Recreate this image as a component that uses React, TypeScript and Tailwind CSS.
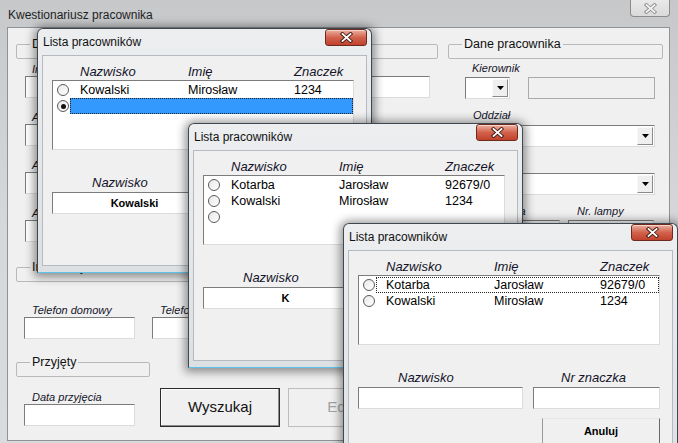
import React from 'react';

type Row = {
    nazwisko: string;
    imie: string;
    znaczek: string;
    checked?: boolean;
    selected?: boolean;
    focus?: boolean;
};

const sunken = 'border border-t-[#7c7c7c] border-l-[#7c7c7c] border-b-[#dcdcdc] border-r-[#dcdcdc]';

const CloseX = ({ inactive }: { inactive?: boolean }) => (
    <svg width="13" height="11" viewBox="0 0 13 11">
        <path d="M2.5 2 L10.5 9 M10.5 2 L2.5 9" stroke={inactive ? '#8d8d8d' : '#3e1710'} strokeWidth="3.6" strokeLinecap="square" fill="none" />
        <path d="M2.5 2 L10.5 9 M10.5 2 L2.5 9" stroke={inactive ? '#f3f3f3' : '#ffffff'} strokeWidth="1.8" strokeLinecap="square" fill="none" />
    </svg>
);

const RedClose = () => (
    <div className="mt-[0px] flex h-[17px] w-[42px] items-center justify-center rounded-[3px] border border-[#6f2a1f] bg-gradient-to-b from-[#eab0a2] via-[#d2624c] to-[#c0412c] shadow-[inset_0_1px_0_rgba(255,255,255,0.5)]">
        <CloseX />
    </div>
);

const Radio = ({ checked }: { checked?: boolean }) => (
    <span className="flex h-[12px] w-[12px] items-center justify-center rounded-full border-[1.5px] border-[#5a5a5a] bg-gradient-to-br from-[#e9e9e9] to-white">
        {checked && <span className="h-[5px] w-[5px] rounded-full bg-[#111]" />}
    </span>
);

const TextBox = ({ className, value, disabled }: { className: string; value?: string; disabled?: boolean }) => (
    <div
        className={`flex h-[22px] items-center justify-center text-[11px] font-bold text-black ${
            disabled ? 'border border-[#ababab] bg-[#f0f0f0]' : `${sunken} bg-white`
        } ${className}`}
    >
        {value}
    </div>
);

const Combo = ({ className }: { className: string }) => (
    <div className={`flex h-[22px] bg-white ${sunken} ${className}`}>
        <div className="flex-1" />
        <div className="my-[1px] mr-[1px] flex w-[16px] items-center justify-center border border-t-[#fafafa] border-l-[#fafafa] border-b-[#8a8a8a] border-r-[#8a8a8a] bg-[#efefef]">
            <svg width="7" height="4" viewBox="0 0 7 4">
                <path d="M0 0 H7 L3.5 4 Z" fill="#000" />
            </svg>
        </div>
    </div>
);

const GroupBox = ({ caption, className }: { caption: string; className: string }) => (
    <div className={`relative h-[15px] rounded-[2px] border border-[#b9b9b9] ${className}`}>
        <span className="absolute -top-[8px] left-[13px] bg-[#f0f0f0] px-[2px] text-[12.5px] leading-[15px] text-[#111]">
            {caption}
        </span>
    </div>
);

const Label = ({ text, className }: { text: string; className: string }) => (
    <div className={`h-[14px] whitespace-nowrap text-[11px] italic leading-[14px] text-[#14142a] ${className}`}>{text}</div>
);

const ListWindow = ({
    pos,
    rows,
    nameValue
}: {
    pos: string;
    rows: Row[];
    nameValue?: string;
}) => (
    <div
        className={`absolute ${pos} flex w-[335px] flex-col rounded-t-[6px] border border-[#3f474f] border-b-[#5ec3ea] bg-gradient-to-b from-[#eceef0] to-[#dde0e3] px-[4px] pb-[6px] shadow-[0_1px_10px_3px_rgba(0,0,0,0.42)]`}
    >
        <div className="flex h-[26px] items-start justify-between">
            <span className="pl-[1px] pt-[6px] text-[12px] leading-[14px] text-[#111]">Lista pracowników</span>
            <RedClose />
        </div>
        <div className="flex-1 border border-[#b4bac0] bg-[#f0f0f0] pl-[9px] pt-[9px]">
            <div className="flex h-[14px] text-[13px] italic leading-[14px] text-[#14142a]">
                <span className="w-[136px] pl-[28px]">Nazwisko</span>
                <span className="w-[106px]">Imię</span>
                <span>Znaczek</span>
            </div>
            <div className={`mt-[1px] h-[70px] w-[302px] bg-white pt-[1px] ${sunken}`}>
                {rows.map((r, i) => (
                    <div key={i} className="flex h-[16px] items-center text-[12.5px] leading-[16px] text-black">
                        <div className="w-[17px] pl-[4px]">
                            <Radio checked={r.checked} />
                        </div>
                        <div
                            className={`flex h-full flex-1 items-center pl-[10px] ${r.selected ? 'bg-[#3399ff]' : ''} ${
                                r.selected || r.focus ? 'outline-1 -outline-offset-1 outline-dotted outline-[#222]' : ''
                            }`}
                        >
                            <span className="w-[108px]">{r.nazwisko}</span>
                            <span className="w-[106px]">{r.imie}</span>
                            <span>{r.znaczek}</span>
                        </div>
                    </div>
                ))}
            </div>
            <div className="mt-[26px] flex gap-[10px]">
                <div className="w-[165px]">
                    <div className="h-[14px] pl-[40px] text-[13px] italic leading-[14px] text-[#14142a]">Nazwisko</div>
                    <TextBox className="mt-[2px] w-[165px]" value={nameValue} />
                </div>
                <div className="w-[127px]">
                    <div className="h-[14px] pl-[28px] text-[13px] italic leading-[14px] text-[#14142a]">Nr znaczka</div>
                    <TextBox className="mt-[2px] w-[127px]" />
                </div>
            </div>
            <button
                type="button"
                className="ml-[184px] mt-[9px] flex h-[26px] w-[118px] items-center justify-center border border-t-[#e6e6e6] border-l-[#9a9a9a] border-b-[#6a6a6a] border-r-[#6a6a6a] bg-[#f0f0f0] text-[11px] font-bold text-black"
            >
                Anuluj
            </button>
        </div>
    </div>
);

export default function App() {
    return (
        <div className="relative flex h-[443px] w-[678px] flex-col overflow-hidden bg-gradient-to-b from-[#c6c8ca] via-[#d5d7d9] to-[#d9dbdd] font-['Liberation_Sans',Arial,sans-serif] text-[#111]">
            {/* title bar */}
            <div className="flex h-[27px] items-start justify-between pl-[8px] pr-[8px]">
                <span className="pt-[8px] text-[12px] leading-[14px] text-[#1e1e1e]">Kwestionariusz pracownika</span>
                <div className="flex h-[17px] w-[40px] items-center justify-center rounded-b-[4px] border border-t-0 border-[#8c8c8c] bg-gradient-to-b from-[#e9e9e9] to-[#dadada]">
                    <CloseX inactive />
                </div>
            </div>

            {/* client area */}
            <div className="ml-[7px] mr-[8px] flex h-[414px] border border-[#8f9396] bg-[#f0f0f0]">
                {/* left column */}
                <div className="ml-[8px] flex w-[422px] flex-col">
                    <GroupBox caption="Dane osobowe" className="mt-[16px] w-full" />
                    <div className="mt-[3px] grid grid-cols-2 gap-x-[10px] gap-y-[12px] pl-[9px] pr-[8px]">
                        {['Imię', 'Nazwisko', 'Adres', 'Miejscowość', 'Adres 2', 'Kod pocztowy', 'Adres e-mail', 'PESEL'].map((l) => (
                            <div key={l}>
                                <Label text={l} className="pl-[7px]" />
                                <TextBox className="w-full" />
                            </div>
                        ))}
                    </div>
                    <GroupBox caption="Informacje kontaktowe" className="mt-[25px] w-full" />
                    <div className="mt-[21px] flex gap-[17px] pl-[8px]">
                        <div className="w-[111px]">
                            <Label text="Telefon domowy" className="pl-[8px]" />
                            <TextBox className="w-full" />
                        </div>
                        <div className="w-[111px]">
                            <Label text="Telefon komórkowy" className="pl-[8px]" />
                            <TextBox className="w-full" />
                        </div>
                    </div>
                    <div className="flex items-start">
                        <div className="w-[134px]">
                            <GroupBox caption="Przyjęty" className="mt-[23px] w-full" />
                            <div className="ml-[8px] mt-[13px] w-[111px]">
                                <Label text="Data przyjęcia" className="pl-[8px]" />
                                <TextBox className="w-full" />
                            </div>
                        </div>
                        <button
                            type="button"
                            className="ml-[10px] mt-[49px] flex h-[39px] w-[120px] items-center justify-center border border-[#2b2b2b] bg-[#f0f0f0] text-[15px] text-[#111] shadow-[inset_-1px_-1px_0_#8c8c8c,inset_1px_1px_0_#fdfdfd]"
                        >
                            Wyszukaj
                        </button>
                        <button
                            type="button"
                            className="ml-[8px] mt-[49px] flex h-[39px] w-[120px] items-center justify-center border border-[#bdbdbd] bg-[#f0f0f0] text-[15px] text-[#a3a3a3]"
                        >
                            Edytuj
                        </button>
                    </div>
                </div>

                {/* right column */}
                <div className="ml-[10px] flex w-[215px] flex-col">
                    <GroupBox caption="Dane pracownika" className="mt-[16px] w-full" />
                    <Label text="Kierownik" className="mt-[2px] pl-[24px]" />
                    <div className="mt-[2px] flex">
                        <Combo className="ml-[17px] w-[45px]" />
                        <TextBox className="ml-[18px] w-[127px]" disabled />
                    </div>
                    <Label text="Oddział" className="mt-[9px] pl-[25px]" />
                    <Combo className="ml-[17px] mt-[3px] w-[190px]" />
                    <Label text="Typ" className="mt-[9px] pl-[57px]" />
                    <Combo className="ml-[17px] mt-[3px] w-[190px]" />
                    <div className="mt-[9px] flex">
                        <div className="ml-[17px] w-[95px]">
                            <Label text="Nr. znaczka" className="pl-[3px]" />
                            <TextBox className="mt-[2px] w-full" />
                        </div>
                        <div className="ml-[8px] w-[86px]">
                            <Label text="Nr. lampy" className="pl-[9px]" />
                            <TextBox className="mt-[2px] w-full" />
                        </div>
                    </div>
                </div>
            </div>

            {/* overlapping dialogs */}
            <ListWindow
                pos="left-[37px] top-[28px] h-[245px]"
                nameValue="Kowalski"
                rows={[
                    { nazwisko: 'Kowalski', imie: 'Mirosław', znaczek: '1234' },
                    { nazwisko: '', imie: '', znaczek: '', checked: true, selected: true }
                ]}
            />
            <ListWindow
                pos="left-[188px] top-[123px] h-[245px]"
                nameValue="K"
                rows={[
                    { nazwisko: 'Kotarba', imie: 'Jarosław', znaczek: '92679/0' },
                    { nazwisko: 'Kowalski', imie: 'Mirosław', znaczek: '1234' },
                    { nazwisko: '', imie: '', znaczek: '' }
                ]}
            />
            <ListWindow
                pos="left-[343px] top-[223px] h-[260px]"
                rows={[
                    { nazwisko: 'Kotarba', imie: 'Jarosław', znaczek: '92679/0', focus: true },
                    { nazwisko: 'Kowalski', imie: 'Mirosław', znaczek: '1234' }
                ]}
            />
        </div>
    );
}
